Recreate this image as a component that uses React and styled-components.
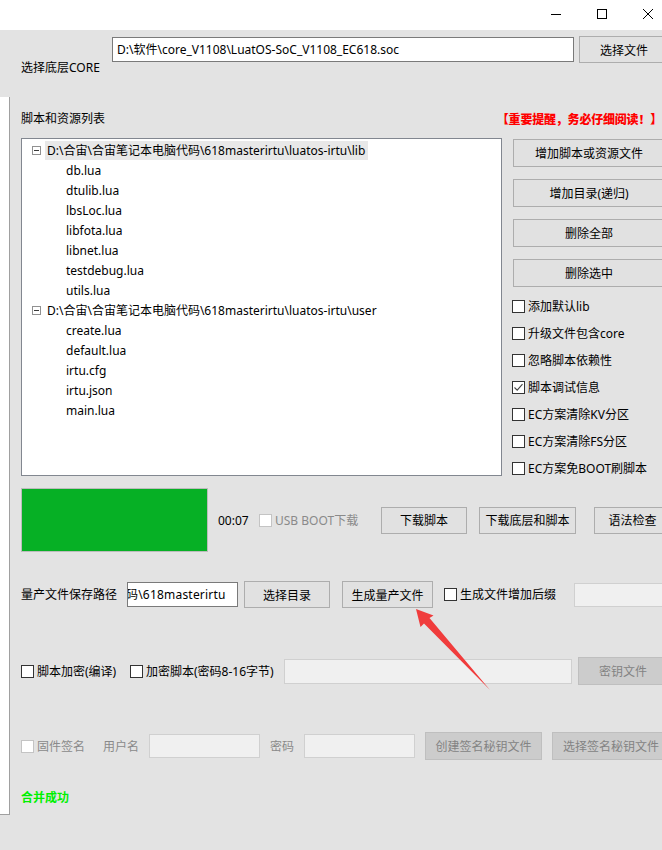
import React from "react";
import styled, { createGlobalStyle, css } from "styled-components";

const Global = createGlobalStyle`
  * { box-sizing: border-box; }
  html, body { margin: 0; padding: 0; background: #e3e3e3; }
  body {
    font-family: "Noto Sans", "Noto Sans CJK SC", sans-serif;
    font-size: 12px;
    color: #000;
  }
`;

const Root = styled.div`
  position: relative;
  width: 662px;
  height: 850px;
  overflow: hidden;
  background: #e3e3e3;
`;

const Window = styled.div`
  width: 671px;
  height: 850px;
  display: flex;
  flex-direction: column;
`;

const TitleBar = styled.div`
  height: 30px;
  flex: none;
  background: #fff;
  display: flex;
  justify-content: flex-end;
`;

const CaptionButton = styled.div`
  width: 46px;
  height: 30px;
  display: flex;
  justify-content: center;
  padding-top: 9px;
`;

const Body = styled.div`
  flex: 1;
  display: flex;
  align-items: flex-start;
`;

const SideStrip = styled.div`
  width: 10px;
  height: 718px;
  margin-top: 67px;
  flex: none;
  background: #fff;
  border-right: 1px solid #a0a0a0;
  border-bottom: 1px solid #a0a0a0;
`;

const Main = styled.div`
  flex: 1;
  display: flex;
  flex-direction: column;
  padding: 7px 0 0 11px;
`;

const Row = styled.div`
  display: flex;
  align-items: ${(p) => p.$align || "center"};
  justify-content: ${(p) => p.$justify || "flex-start"};
  padding-right: ${(p) => p.$pr || 0}px;
  margin-top: ${(p) => p.$mt || 0}px;
  height: ${(p) => (p.$h ? `${p.$h}px` : "auto")};
`;

const Label = styled.span`
  display: block;
  flex: none;
  width: ${(p) => (p.$w ? `${p.$w}px` : "auto")};
  margin-left: ${(p) => p.$ml || 0}px;
  padding-top: ${(p) => p.$pt || 0}px;
  line-height: 17px;
  white-space: nowrap;
  color: ${(p) => (p.$disabled ? "#8a8a8a" : "#000")};
`;

const Warning = styled.span`
  font-family: "Noto Sans CJK SC", sans-serif;
  font-weight: 900;
  font-size: 12px;
  line-height: 17px;
  color: #ff0000;
  letter-spacing: -0.2px;
`;

const Button = styled.button`
  flex: none;
  width: ${(p) => p.$w}px;
  height: ${(p) => p.$h || 27}px;
  margin: ${(p) => p.$mt || 0}px 0 0 ${(p) => p.$ml || 0}px;
  padding: 0;
  font-family: inherit;
  font-size: 12px;
  color: #000;
  background: #e1e1e1;
  border: 1px solid #adadad;
  white-space: nowrap;
  ${(p) =>
    p.disabled &&
    css`
      background: #cccccc;
      border-color: #bfbfbf;
      color: #838383;
    `}
`;

const TextBox = styled.div`
  flex: none;
  width: ${(p) => p.$w}px;
  height: ${(p) => p.$h || 25}px;
  margin-left: ${(p) => p.$ml || 0}px;
  background: #fff;
  border: 1px solid #7a7a7a;
  padding: 0 ${(p) => (p.$tight ? 0 : 4)}px;
  line-height: ${(p) => (p.$h || 25) - 2}px;
  white-space: nowrap;
  overflow: hidden;
  ${(p) =>
    p.$disabled &&
    css`
      background: #f0f0f0;
      border-color: #d0d0d0;
    `}
`;

const ClippedText = styled.span`
  display: inline-block;
  margin-left: -2px;
  letter-spacing: 0.2px;
`;

const PanelRow = styled.div`
  display: flex;
  align-items: flex-start;
  margin-top: 11px;
`;

const TreeBox = styled.div`
  flex: none;
  width: 481px;
  height: 338px;
  background: #fff;
  border: 1px solid #828790;
  padding-top: 1px;
`;

const TreeRow = styled.div`
  height: 20px;
  display: flex;
  align-items: center;
  padding-left: ${(p) => p.$indent}px;
  white-space: nowrap;
`;

const Expander = styled.span`
  position: relative;
  width: 9px;
  height: 9px;
  flex: none;
  border: 1px solid #919191;
  background: #fff;
  &::after {
    content: "";
    position: absolute;
    left: 1px;
    top: 3px;
    width: 5px;
    height: 1px;
    background: #3a3a3a;
  }
`;

const NodeText = styled.span`
  height: 19px;
  line-height: 19px;
  margin-left: ${(p) => (p.$root ? 4 : 0)}px;
  padding: ${(p) => (p.$root ? "0 3px 0 2px" : "0")};
  background: ${(p) => (p.$selected ? "#e8e8e8" : "transparent")};
`;

const SideColumn = styled.div`
  flex: none;
  width: 159px;
  margin-left: 10px;
  padding-top: 1px;
  display: flex;
  flex-direction: column;
`;

const SideButtons = styled.div`
  display: flex;
  flex-direction: column;
  gap: 12px;
  padding-left: 1px;
`;

const CheckList = styled.div`
  margin-top: 6px;
  display: flex;
  flex-direction: column;
`;

const CheckGroup = styled.label`
  flex: none;
  display: flex;
  align-items: center;
  gap: 3px;
  height: ${(p) => (p.$h ? `${p.$h}px` : "auto")};
  width: ${(p) => (p.$w ? `${p.$w}px` : "auto")};
  margin-left: ${(p) => p.$ml || 0}px;
  white-space: nowrap;
  line-height: 17px;
  color: ${(p) => (p.$disabled ? "#8a8a8a" : "#000")};
`;

const Box = styled.span`
  width: 13px;
  height: 13px;
  flex: none;
  background: #fff;
  border: 1px solid ${(p) => (p.$disabled ? "#c4c4c4" : "#333")};
  display: flex;
  align-items: center;
  justify-content: center;
`;

const ProgressBar = styled.div`
  flex: none;
  width: 187px;
  height: 64px;
  border: 1px solid #bcbcbc;
  background: #06b025;
`;

const Status = styled.div`
  margin-top: 28px;
  line-height: 17px;
  font-family: "Noto Sans CJK SC", sans-serif;
  font-weight: 700;
  color: #00f000;
`;

const ArrowLayer = styled.svg`
  position: absolute;
  left: 0;
  top: 0;
  pointer-events: none;
`;

function Check({ checked, disabled }) {
  return (
    <Box $disabled={disabled}>
      {checked && (
        <svg width="11" height="11" viewBox="0 0 11 11">
          <path d="M1.5 5.5 L4.2 8.2 L9.5 2.2" fill="none" stroke="#444" strokeWidth="1.1" />
        </svg>
      )}
    </Box>
  );
}

function CheckItem({ label, checked, disabled, ...rest }) {
  return (
    <CheckGroup $disabled={disabled} {...rest}>
      <Check checked={checked} disabled={disabled} />
      <span>{label}</span>
    </CheckGroup>
  );
}

const libFiles = ["db.lua", "dtulib.lua", "lbsLoc.lua", "libfota.lua", "libnet.lua", "testdebug.lua", "utils.lua"];
const userFiles = ["create.lua", "default.lua", "irtu.cfg", "irtu.json", "main.lua"];

const options = [
  { label: "添加默认lib" },
  { label: "升级文件包含core" },
  { label: "忽略脚本依赖性" },
  { label: "脚本调试信息", checked: true },
  { label: "EC方案清除KV分区" },
  { label: "EC方案清除FS分区" },
  { label: "EC方案免BOOT刷脚本" },
];

export default function App() {
  return (
    <Root>
      <Global />
      <Window>
        <TitleBar>
          <CaptionButton>
            <svg width="10" height="10" viewBox="0 0 10 10">
              <path d="M0 5.5 H10" stroke="#000" strokeWidth="1" />
            </svg>
          </CaptionButton>
          <CaptionButton>
            <svg width="10" height="10" viewBox="0 0 10 10">
              <rect x="0.5" y="0.5" width="9" height="9" fill="none" stroke="#000" strokeWidth="1" />
            </svg>
          </CaptionButton>
          <CaptionButton>
            <svg width="10" height="10" viewBox="0 0 10 10">
              <path d="M0 0 L10 10 M10 0 L0 10" stroke="#000" strokeWidth="1" />
            </svg>
          </CaptionButton>
        </TitleBar>
        <Body>
          <SideStrip />
          <Main>
            <Row $align="flex-start">
              <Label $w={91} $pt={22}>选择底层CORE</Label>
              <TextBox $w={462}>D:\软件\core_V1108\LuatOS-SoC_V1108_EC618.soc</TextBox>
              <Button $w={90} $mt={-1} $ml={5}>选择文件</Button>
            </Row>

            <Row $mt={34} $justify="space-between" $pr={9}>
              <Label>脚本和资源列表</Label>
              <Warning>【重要提醒，务必仔细阅读！】</Warning>
            </Row>

            <PanelRow>
              <TreeBox>
                <TreeRow $indent={10}>
                  <Expander />
                  <NodeText $root $selected>D:\合宙\合宙笔记本电脑代码\618masterirtu\luatos-irtu\lib</NodeText>
                </TreeRow>
                {libFiles.map((f) => (
                  <TreeRow key={f} $indent={44}>
                    <NodeText>{f}</NodeText>
                  </TreeRow>
                ))}
                <TreeRow $indent={10}>
                  <Expander />
                  <NodeText $root>D:\合宙\合宙笔记本电脑代码\618masterirtu\luatos-irtu\user</NodeText>
                </TreeRow>
                {userFiles.map((f) => (
                  <TreeRow key={f} $indent={44}>
                    <NodeText>{f}</NodeText>
                  </TreeRow>
                ))}
              </TreeBox>
              <SideColumn>
                <SideButtons>
                  <Button $w={152} $h={28}>增加脚本或资源文件</Button>
                  <Button $w={152} $h={28}>增加目录(递归)</Button>
                  <Button $w={152} $h={28}>删除全部</Button>
                  <Button $w={152} $h={28}>删除选中</Button>
                </SideButtons>
                <CheckList>
                  {options.map((o) => (
                    <CheckItem key={o.label} $h={27} label={o.label} checked={o.checked} />
                  ))}
                </CheckList>
              </SideColumn>
            </PanelRow>

            <Row $mt={6} $h={64}>
              <ProgressBar />
              <Label $w={41} $ml={10}>00:07</Label>
              <CheckItem $w={122} label="USB BOOT下载" disabled />
              <Button $w={86}>下载脚本</Button>
              <Button $w={97} $ml={12}>下载底层和脚本</Button>
              <Button $w={77} $ml={18}>语法检查</Button>
            </Row>

            <Row $mt={29} $h={27}>
              <Label $w={106}>量产文件保存路径</Label>
              <TextBox $w={111} $tight>
                <ClippedText>码\618masterirtu</ClippedText>
              </TextBox>
              <Button $w={86} $ml={6}>选择目录</Button>
              <Button $w={91} $ml={12}>生成量产文件</Button>
              <CheckItem $w={130} $ml={11} label="生成文件增加后缀" />
              <TextBox $w={97} $h={24} $disabled />
            </Row>

            <Row $mt={49} $h={28}>
              <CheckItem $w={109} label="脚本加密(编译)" />
              <CheckItem $w={154} label="加密脚本(密码8-16字节)" />
              <TextBox $w={288} $disabled />
              <Button $w={90} $h={28} $ml={6} disabled>密钥文件</Button>
            </Row>

            <Row $mt={47} $h={28}>
              <CheckItem $w={82} label="固件签名" disabled />
              <Label $w={46} $disabled>用户名</Label>
              <TextBox $w={111} $h={24} $disabled />
              <Label $w={34} $ml={10} $disabled>密码</Label>
              <TextBox $w={111} $h={24} $disabled />
              <Button $w={117} $h={28} $ml={10} disabled>创建签名秘钥文件</Button>
              <Button $w={118} $h={28} $ml={10} disabled>选择签名秘钥文件</Button>
            </Row>

            <Status>合并成功</Status>
          </Main>
        </Body>
      </Window>
      <ArrowLayer width="662" height="850" viewBox="0 0 662 850">
        <polygon
          points="416,609 420.5,627 424,623.5 490,690 429.5,618 433.5,615.5"
          fill="#f03c3c"
        />
      </ArrowLayer>
    </Root>
  );
}
